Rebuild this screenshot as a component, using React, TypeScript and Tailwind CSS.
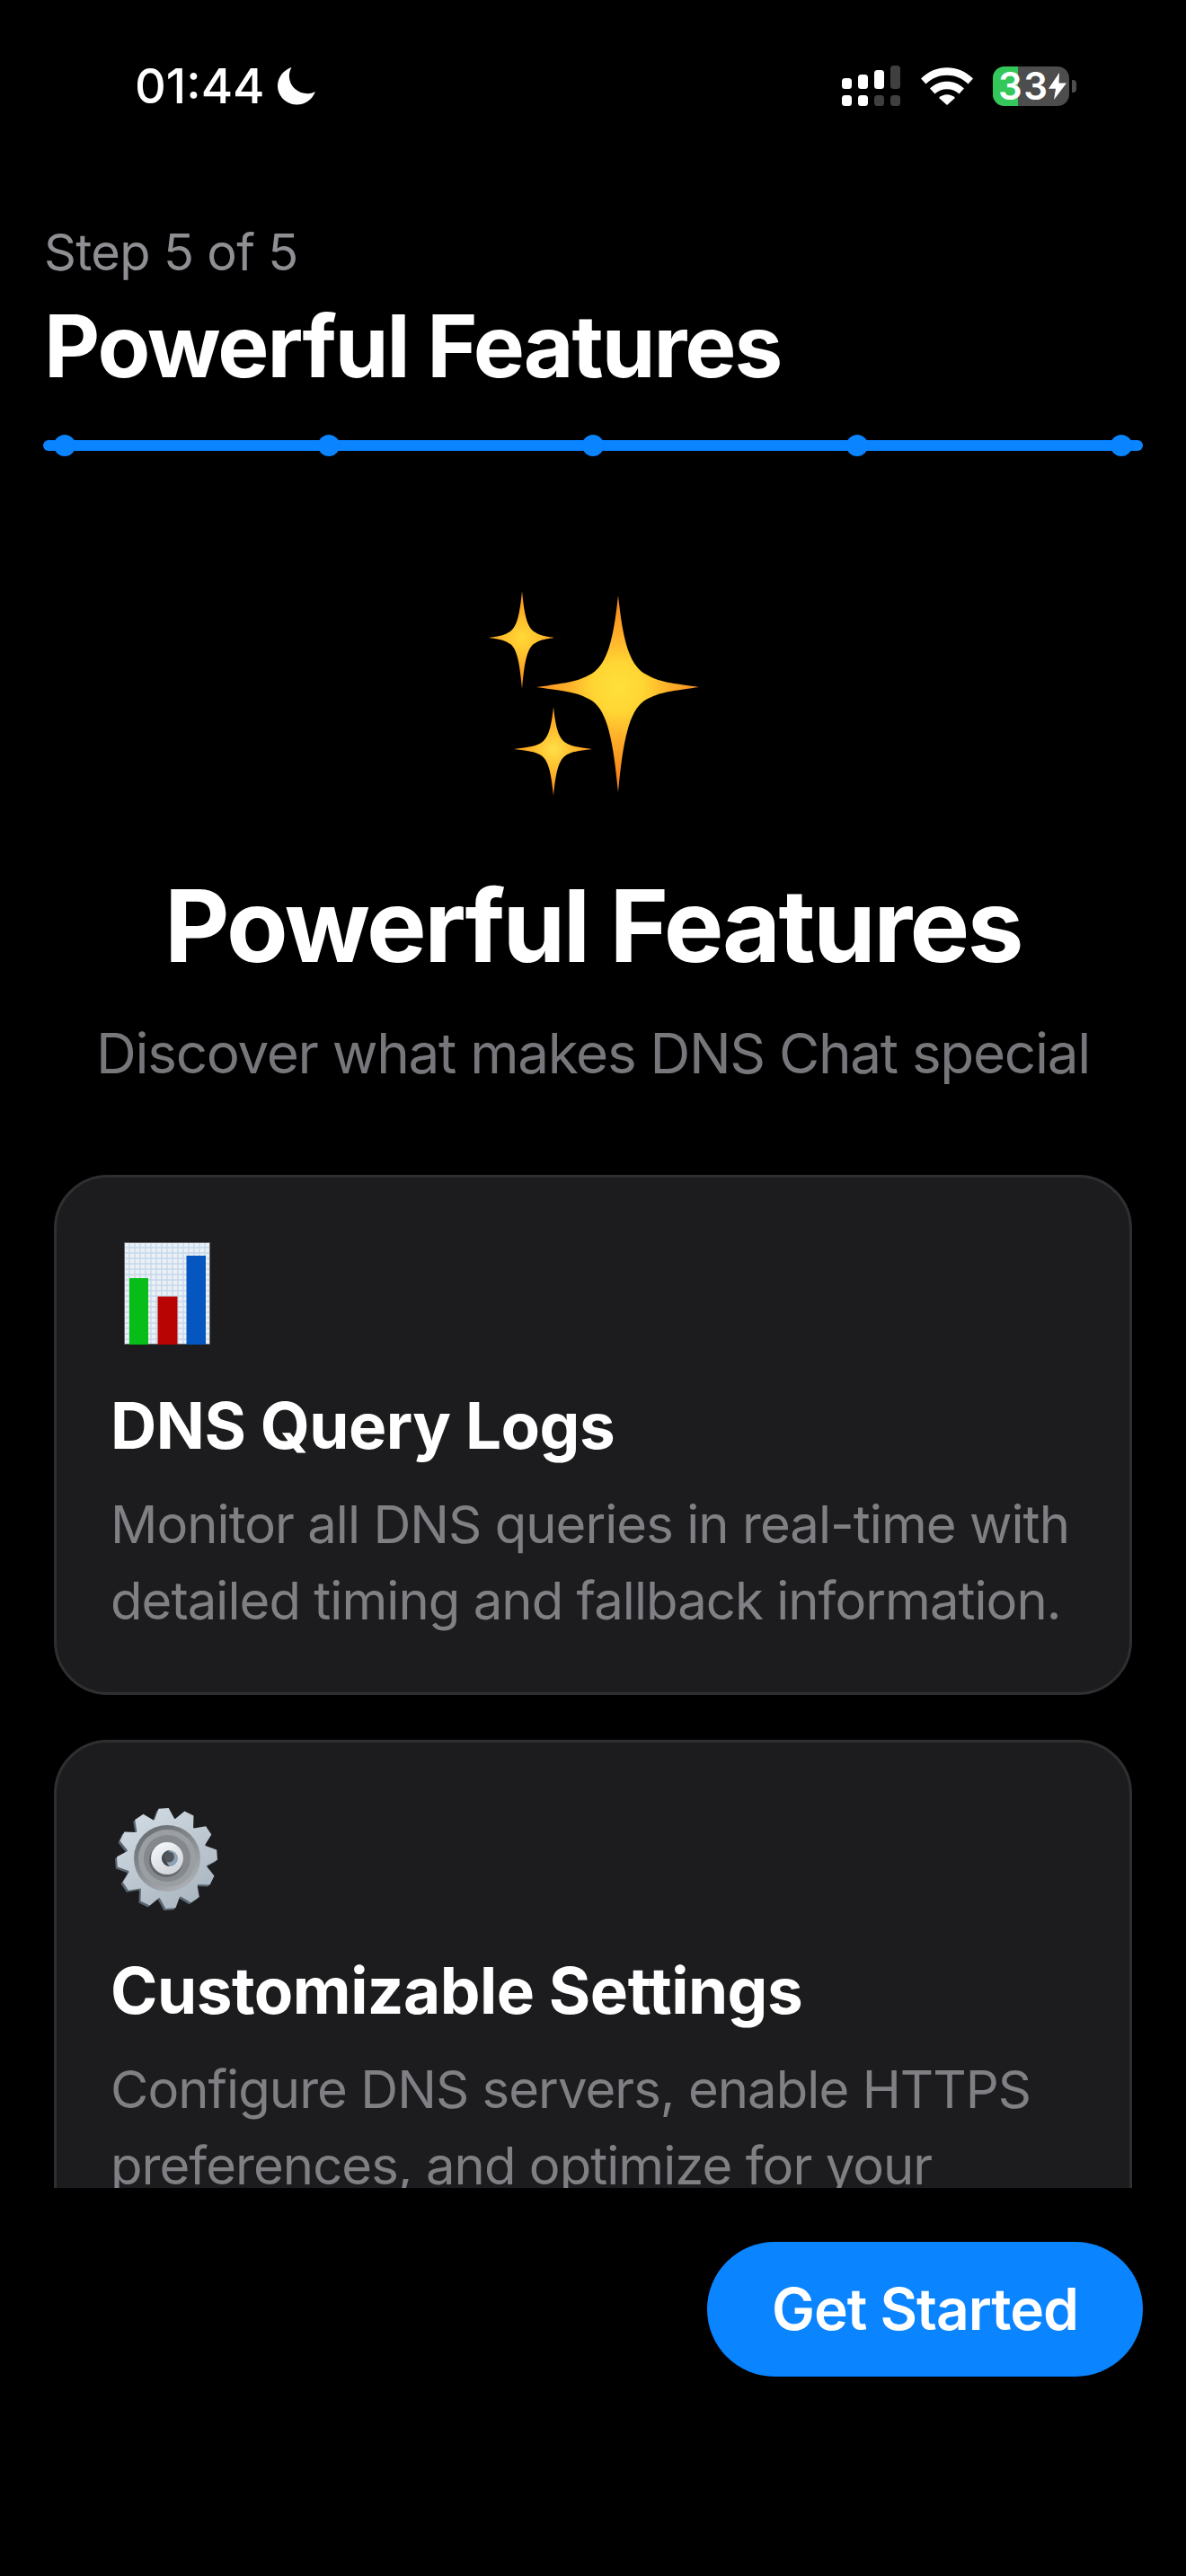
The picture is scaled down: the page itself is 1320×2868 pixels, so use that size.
import React from "react";

function starPath(cx: number, cy: number, l: number, r: number, t: number, b: number) {
  const w = (l + r + t + b) / 4;
  const s = w * 0.22;
  const e = w * 0.055;
  return [
    `M${cx} ${cy - t}`,
    `C${cx + e} ${cy - t * 0.5} ${cx + s * 0.55} ${cy - s * 1.25} ${cx + s * 1.3} ${cy - s * 0.7}`,
    `C${cx + s * 2} ${cy - s * 0.3} ${cx + r * 0.55} ${cy - e} ${cx + r} ${cy}`,
    `C${cx + r * 0.55} ${cy + e} ${cx + s * 2} ${cy + s * 0.3} ${cx + s * 1.3} ${cy + s * 0.7}`,
    `C${cx + s * 0.55} ${cy + s * 1.25} ${cx + e} ${cy + b * 0.5} ${cx} ${cy + b}`,
    `C${cx - e} ${cy + b * 0.5} ${cx - s * 0.55} ${cy + s * 1.25} ${cx - s * 1.3} ${cy + s * 0.7}`,
    `C${cx - s * 2} ${cy + s * 0.3} ${cx - l * 0.55} ${cy + e} ${cx - l} ${cy}`,
    `C${cx - l * 0.55} ${cy - e} ${cx - s * 2} ${cy - s * 0.3} ${cx - s * 1.3} ${cy - s * 0.7}`,
    `C${cx - s * 0.55} ${cy - s * 1.25} ${cx - e} ${cy - t * 0.5} ${cx} ${cy - t}Z`,
  ].join("");
}

function Sparkles() {
  return (
    <svg viewBox="540 650 240 240" className="block h-[240px] w-[240px]">
      <defs>
        <radialGradient id="sp1" gradientUnits="userSpaceOnUse" cx="688" cy="765" r="100">
          <stop offset="0" stopColor="#ffe03a" />
          <stop offset="0.28" stopColor="#ffd633" />
          <stop offset="0.55" stopColor="#ffb12a" />
          <stop offset="1" stopColor="#f6861c" />
        </radialGradient>
        <radialGradient id="sp2" gradientUnits="userSpaceOnUse" cx="581" cy="710" r="52">
          <stop offset="0" stopColor="#ffd936" />
          <stop offset="0.4" stopColor="#ffbf2d" />
          <stop offset="1" stopColor="#f6881c" />
        </radialGradient>
        <radialGradient id="sp3" gradientUnits="userSpaceOnUse" cx="616" cy="834" r="50">
          <stop offset="0" stopColor="#ffe04a" />
          <stop offset="0.4" stopColor="#ffc02e" />
          <stop offset="1" stopColor="#f6881c" />
        </radialGradient>
      </defs>
      <path d={starPath(688, 765, 91, 90, 102, 117)} fill="url(#sp1)" />
      <path d={starPath(581, 710, 37, 36, 52, 57)} fill="url(#sp2)" />
      <path d={starPath(616, 834, 44, 43, 47, 52)} fill="url(#sp3)" />
    </svg>
  );
}

function ChartEmoji() {
  const lines = [6, 12, 18, 24, 30, 36, 42, 48, 54, 60, 66, 72, 78, 84, 90];
  return (
    <svg viewBox="0 0 96 114" className="block h-[114px] w-[96px]">
      <rect x="0" y="0" width="96" height="114" fill="#ecf0f4" />
      {lines.map((x) => (
        <line key={x} x1={x} y1="0" x2={x} y2="114" stroke="#c4d9ec" strokeWidth="1.4" />
      ))}
      {[...lines, 96, 102, 108].map((y) => (
        <line key={y} x1="0" y1={y} x2="96" y2={y} stroke="#c4d9ec" strokeWidth="1.4" />
      ))}
      <rect x="0.5" y="0.5" width="95" height="113" fill="none" stroke="#66686c" strokeWidth="1" />
      <rect x="6" y="40" width="21" height="74" fill="#07bd18" />
      <rect x="37.5" y="60.5" width="22" height="53.5" fill="#b90404" />
      <rect x="69.5" y="15" width="21.5" height="99" fill="#0556c0" />
    </svg>
  );
}

function gearPath(cx: number, cy: number) {
  const teeth = 12;
  const R = 56;
  const r = 45;
  const pts: string[] = [];
  for (let i = 0; i < teeth; i++) {
    const a = ((-94 + i * 30) * Math.PI) / 180;
    const spread = [-0.25, -0.1, 0.1, 0.25];
    const rad = [r, R, R, r];
    spread.forEach((d, j) => {
      pts.push(`${(cx + Math.cos(a + d) * rad[j]).toFixed(1)} ${(cy + Math.sin(a + d) * rad[j]).toFixed(1)}`);
    });
  }
  return "M" + pts.join("L") + "Z";
}

function GearEmoji() {
  return (
    <svg viewBox="0 0 120 120" className="block h-[120px] w-[120px]">
      <defs>
        <linearGradient id="g1" x1="0.2" y1="0" x2="0.8" y2="1">
          <stop offset="0" stopColor="#d2dbe3" />
          <stop offset="1" stopColor="#a8b4bf" />
        </linearGradient>
        <linearGradient id="g2" x1="0.2" y1="0" x2="0.8" y2="1">
          <stop offset="0" stopColor="#666b70" />
          <stop offset="1" stopColor="#b0b4b8" />
        </linearGradient>
        <linearGradient id="g3" x1="0.2" y1="0" x2="0.8" y2="1">
          <stop offset="0" stopColor="#f6f8fa" />
          <stop offset="1" stopColor="#ccd1d6" />
        </linearGradient>
      </defs>
      <path d={gearPath(58, 62)} fill="#59646e" />
      <path d={gearPath(60, 60)} fill="url(#g1)" />
      <circle cx="60" cy="60" r="37" fill="url(#g2)" />
      <circle cx="60" cy="60" r="32" fill="#9a9fa3" />
      <circle cx="60" cy="60" r="26" fill="#85898d" />
      <circle cx="59" cy="62" r="19" fill="#63676c" />
      <circle cx="60" cy="60" r="18" fill="url(#g3)" />
      <circle cx="63" cy="60" r="9" fill="#8ea3b5" />
      <path d="M63 51 A9 9 0 0 0 63 69 A12 12 0 0 1 63 51Z" fill="#3f444a" />
      <circle cx="62" cy="58.5" r="6" fill="#50565c" />
    </svg>
  );
}

function Signal() {
  return (
    <svg width="66" height="46" viewBox="0 0 66 46" className="block">
      <rect x="0" y="14" width="11" height="12" rx="3.5" fill="#fff" />
      <rect x="18" y="10" width="11" height="16" rx="3.5" fill="#fff" />
      <rect x="36" y="5" width="11" height="21" rx="3.5" fill="#fff" />
      <rect x="54" y="0" width="11" height="26" rx="3.5" fill="#3f3f3f" />
      <rect x="0" y="33" width="11" height="12" rx="3.5" fill="#fff" />
      <rect x="18" y="33" width="11" height="12" rx="3.5" fill="#fff" />
      <rect x="36" y="33" width="11" height="12" rx="3.5" fill="#3f3f3f" />
      <rect x="54" y="33" width="11" height="12" rx="3.5" fill="#3f3f3f" />
    </svg>
  );
}

function Wifi() {
  return (
    <svg width="58" height="42" viewBox="0 0 58 42" className="block">
      <path d="M0 12.5C16-4 42-4 58 12.5L52.5 18.5C39.5 5.5 18.5 5.5 5.5 18.5Z" fill="#fff" />
      <path d="M10 23.5C20.5 13 37.5 13 48 23.5L42.5 29.5C35 22.5 23 22.5 15.5 29.5Z" fill="#fff" />
      <path d="M20 34C25 29 33 29 38 34L29 42Z" fill="#fff" />
    </svg>
  );
}

function Moon() {
  return (
    <svg width="42" height="42" viewBox="0 0 42 42" className="block">
      <path d="M15.5 0C13.5 3.5 12.5 7.5 13 11.5C14 23 25 30.5 36 29C38 28.7 40.2 28 42 27C38.5 36 30 42 20.5 41.5C9 41 0 31.5 0 20.5C0 11 6.5 3 15.5 0Z" fill="#fff" />
    </svg>
  );
}

function Battery() {
  return (
    <div className="flex items-center gap-[3px]">
      <div className="relative h-[44px] w-[85px] rounded-[13px] bg-[#4d4d4d]">
        <div className="absolute inset-y-0 left-0 w-[28px] rounded-l-[13px] bg-[#34c759]" />
        <div className="absolute inset-0 flex items-center pl-[6px]">
          <span className="text-[42px] leading-[44px] font-semibold tracking-[1.5px] text-white">33</span>
          <svg width="20" height="30" viewBox="0 0 20 34" preserveAspectRatio="none" className="block shrink-0">
            <path d="M12 0L0 20H8L6 34L20 13H11.5Z" fill="#fff" />
          </svg>
        </div>
      </div>
      <div className="h-[14px] w-[5px] rounded-r-[4px] bg-[#4d4d4d]" />
    </div>
  );
}

function Card({
  icon,
  title,
  lines,
  iconClass,
}: {
  icon: React.ReactNode;
  title: string;
  lines: string[];
  iconClass: string;
}) {
  return (
    <div className="w-[1200px] shrink-0 rounded-[60px] border-[3px] border-[#2f2f32] bg-[#1c1c1e] px-[60px] pt-[60px] pb-[59px]">
      <div className={iconClass}>{icon}</div>
      <div className="mt-[50px] h-[80px] text-[71px] leading-[80px] font-bold tracking-[-0.5px] text-white">{title}</div>
      <div className="mt-[28px] text-[58px] leading-[85px] font-normal tracking-[-0.95px] whitespace-nowrap text-[#808084]">
        {lines.map((l) => (
          <div key={l}>{l}</div>
        ))}
      </div>
    </div>
  );
}

export default function App() {
  const dots = [0, 1, 2, 3, 4];
  return (
    <div className="flex h-[2868px] w-[1320px] flex-col overflow-hidden bg-black font-['Inter',sans-serif] text-white">
      <div className="flex h-[192px] shrink-0 items-center justify-between pr-[122px] pl-[150px]">
        <div className="flex items-center gap-[14px]">
          <span className="text-[54px] leading-[60px] font-medium">01:44</span>
          <Moon />
        </div>
        <div className="flex items-center gap-[22px]">
          <Signal />
          <Wifi />
          <Battery />
        </div>
      </div>

      <div className="shrink-0 px-[48px]">
        <div className="mt-[57px] pl-[1px] text-[56px] leading-[64px] tracking-[-0.7px] text-[#8e8e93]">Step 5 of 5</div>
        <div className="mt-[14px] pl-[1px] text-[96px] leading-[116px] font-bold tracking-[-2px]">Powerful Features</div>
        <div className="relative mt-[47px] h-[12px] rounded-full bg-[#0a84ff]">
          <div className="absolute inset-x-[12px] top-[-6px] flex justify-between">
            {dots.map((d) => (
              <div key={d} className="h-[24px] w-[24px] rounded-full bg-[#0a84ff]" />
            ))}
          </div>
        </div>
      </div>

      <div className="flex h-[1934px] shrink-0 flex-col items-center overflow-hidden">
        <div className="mt-[148px]">
          <Sparkles />
        </div>
        <div className="mt-[72px] text-[112px] leading-[136px] font-bold tracking-[-2.5px]">Powerful Features</div>
        <div className="mt-[38px] text-[62px] leading-[74px] tracking-[-1.3px] text-[#77777b]">Discover what makes DNS Chat special</div>
        <div className="mt-[98px] flex flex-col gap-[50px]">
          <Card
            iconClass="ml-[15px] mt-[12px]"
            icon={<ChartEmoji />}
            title="DNS Query Logs"
            lines={["Monitor all DNS queries in real-time with", "detailed timing and fallback information."]}
          />
          <Card
            iconClass="ml-[3px] mt-[9px] h-[117px]"
            icon={<GearEmoji />}
            title="Customizable Settings"
            lines={["Configure DNS servers, enable HTTPS", "preferences, and optimize for your"]}
          />
        </div>
      </div>

      <div className="flex shrink-0 justify-end px-[48px] pt-[60px]">
        <div className="flex h-[150px] w-[485px] items-center justify-center rounded-full bg-[#0a84ff] text-[64px] font-semibold tracking-[-1px] text-white">
          Get Started
        </div>
      </div>
    </div>
  );
}
